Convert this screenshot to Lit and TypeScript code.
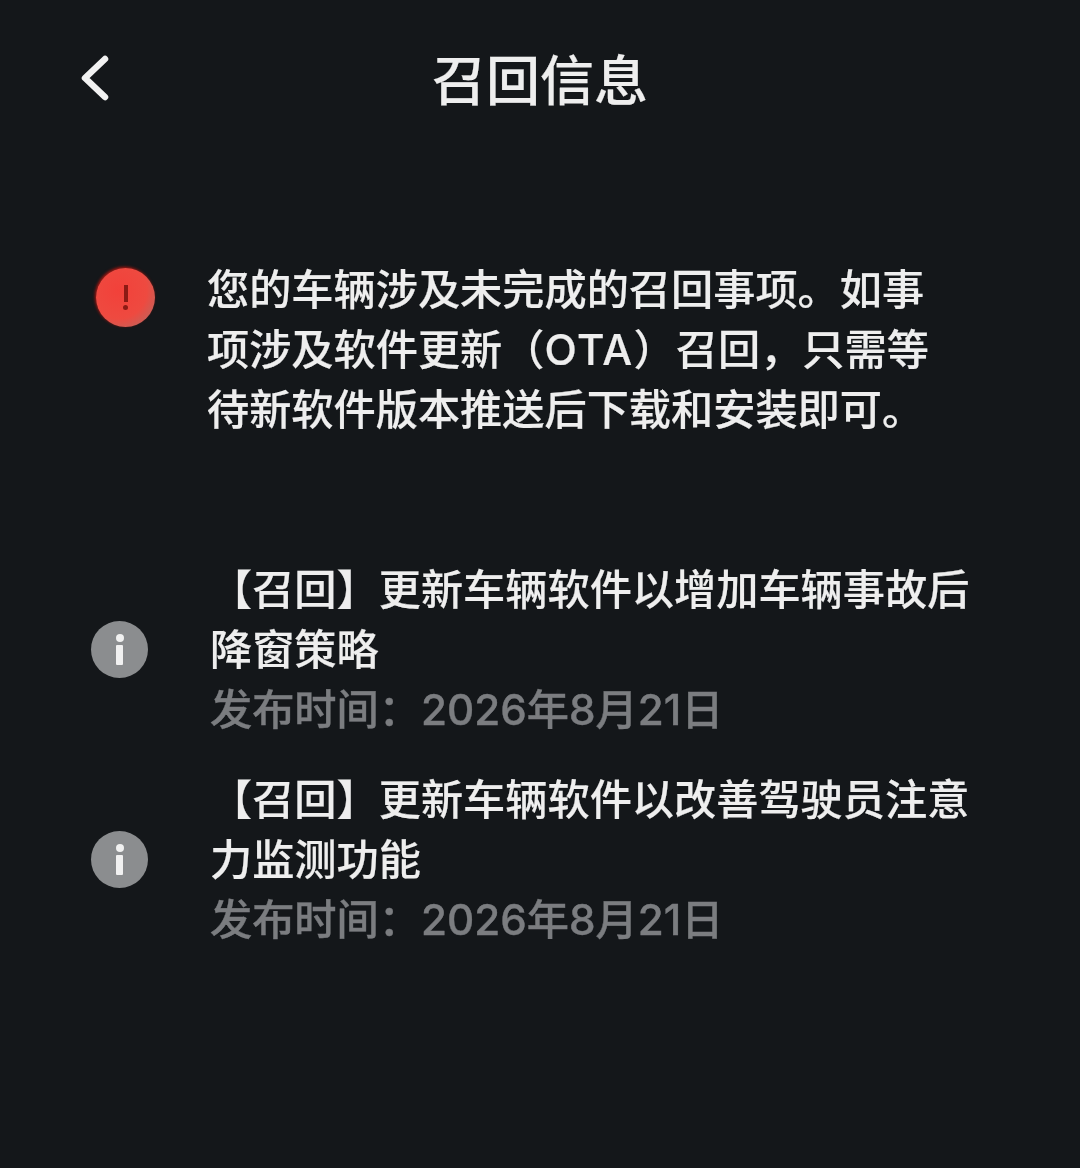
import { LitElement, css, html } from 'lit'
import { customElement } from 'lit/decorators.js'

const recalls = [
  { lines: ['【召回】更新车辆软件以增加车辆事故后', '降窗策略'], date: '发布时间：2026年8月21日' },
  { lines: ['【召回】更新车辆软件以改善驾驶员注意', '力监测功能'], date: '发布时间：2026年8月21日' },
]

@customElement('app-root')
export class AppRoot extends LitElement {
  render() {
    return html`
      <div class="page">
        <header class="header">
          <svg class="back" width="30" height="46" viewBox="0 0 30 46">
            <path d="M25 4 L5 23 L25 42" fill="none" stroke="#f2f2f2" stroke-width="6.5" stroke-linecap="round" stroke-linejoin="round" />
          </svg>
          <h1 class="title">召回信息</h1>
        </header>

        <section class="alert">
          <div class="alert-icon"><span class="mark"></span><span class="dot"></span></div>
          <p class="alert-text">
            您的车辆涉及未完成的召回事项。如事<br />项涉及软件更新（<span class="latin">OTA</span>）召回，只需等<br />待新软件版本推送后下载和安装即可。
          </p>
        </section>

        <section class="list">
          ${recalls.map(
            (item) => html`
              <div class="item">
                <div class="info-icon"><span class="i-dot"></span><span class="i-stem"></span></div>
                <div class="item-body">
                  ${item.lines.map((line) => html`<div class="line">${line}</div>`)}
                  <div class="date">${item.date}</div>
                </div>
              </div>
            `
          )}
        </section>
      </div>
    `
  }

  static styles = css`
    :host {
      display: block;
    }

    .page {
      width: 1080px;
      height: 1168px;
      box-sizing: border-box;
      background: #14171a;
      color: #eeeeee;
      font-family: Inter, 'Noto Sans CJK SC', sans-serif;
      font-weight: 500;
      -webkit-text-stroke: 0.2px currentColor;
      filter: blur(0.4px);
      overflow: hidden;
    }

    .header {
      display: flex;
      align-items: center;
      justify-content: center;
      position: relative;
      box-sizing: border-box;
      height: 158px;
      padding-top: 6px;
    }

    .back {
      position: absolute;
      left: 80px;
      top: 55px;
    }

    .title {
      margin: 0;
      font-size: 54px;
      font-weight: 500;
      line-height: 60px;
    }

    .alert {
      display: flex;
      align-items: flex-start;
      margin-top: 102px;
      padding-left: 96px;
    }

    .alert-icon {
      width: 59px;
      height: 59px;
      margin-top: 8px;
      flex-shrink: 0;
      border-radius: 50%;
      background: radial-gradient(circle at 38% 38%, #f2413a 0%, #ee4a40 55%, #a8706a 100%);
      box-shadow: -1px -1px 3px #b3160f;
      display: flex;
      flex-direction: column;
      align-items: center;
      justify-content: center;
      gap: 3px;
    }

    .mark {
      width: 4px;
      height: 17px;
      background: #8c1a14;
    }

    .dot {
      width: 5px;
      height: 5px;
      border-radius: 50%;
      background: #8c1a14;
    }

    .alert-text {
      margin: 0 0 0 52px;
      font-size: 42.2px;
      line-height: 60px;
      white-space: nowrap;
    }

    .latin {
      letter-spacing: 1.4px;
    }

    .list {
      display: flex;
      flex-direction: column;
      gap: 30px;
      margin-top: 120px;
    }

    .item {
      display: flex;
      align-items: center;
      padding-left: 91px;
    }

    .info-icon {
      width: 57px;
      height: 57px;
      margin-bottom: 2px;
      flex-shrink: 0;
      border-radius: 50%;
      background: #8b8d8f;
      display: flex;
      flex-direction: column;
      align-items: center;
      justify-content: center;
      gap: 3px;
    }

    .i-dot {
      width: 8px;
      height: 8px;
      border-radius: 50%;
      background: #f1f1f1;
    }

    .i-stem {
      width: 7px;
      height: 20px;
      border-radius: 1px;
      background: #f1f1f1;
    }

    .item-body {
      margin-left: 62px;
      font-size: 42.2px;
      line-height: 60px;
      white-space: nowrap;
    }

    .date {
      color: #7b7d80;
      -webkit-text-stroke: 0.4px currentColor;
    }
  `
}
